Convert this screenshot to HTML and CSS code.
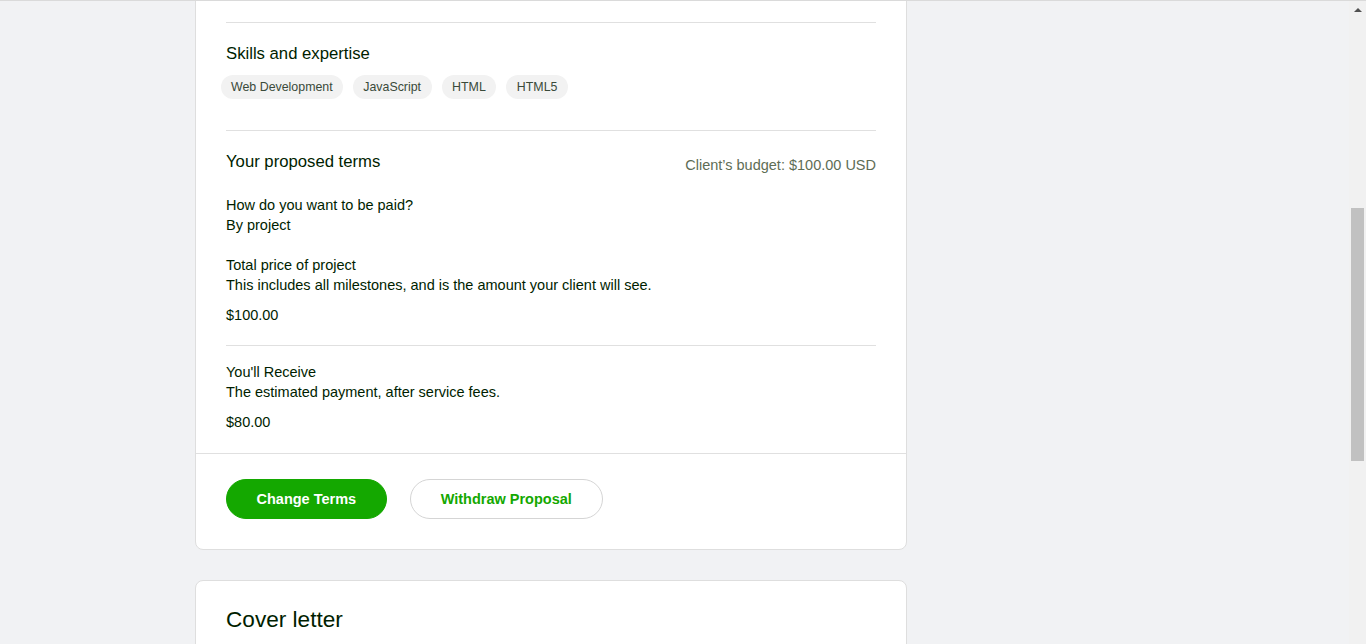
FILE: index.html
```html
<!DOCTYPE html>
<html lang="en">
<head>
<meta charset="utf-8">
<title>Proposal</title>
<link rel="stylesheet" href="styles.css">
</head>
<body>
<div class="page">
  <main class="column">
    <section class="card">
      <div class="section section-top"></div>

      <div class="section skills">
        <h3 class="section-title">Skills and expertise</h3>
        <ul class="chips">
          <li class="chip">Web Development</li>
          <li class="chip">JavaScript</li>
          <li class="chip">HTML</li>
          <li class="chip">HTML5</li>
        </ul>
      </div>

      <div class="section terms">
        <div class="terms-head">
          <h3 class="section-title">Your proposed terms</h3>
          <span class="budget">Client’s budget: $100.00 USD</span>
        </div>
        <div class="field">
          <div class="label">How do you want to be paid?</div>
          <div class="text">By project</div>
        </div>
        <div class="field">
          <div class="label">Total price of project</div>
          <div class="text">This includes all milestones, and is the amount your client will see.</div>
          <div class="amount">$100.00</div>
        </div>
      </div>

      <div class="section receive">
        <div class="field first">
          <div class="label">You'll Receive</div>
          <div class="text">The estimated payment, after service fees.</div>
          <div class="amount">$80.00</div>
        </div>
      </div>

      <div class="card-footer">
        <button class="btn btn-primary" type="button">Change Terms</button>
        <button class="btn btn-secondary" type="button">Withdraw Proposal</button>
      </div>
    </section>

    <section class="card cover">
      <h2 class="cover-title">Cover letter</h2>
    </section>
  </main>
</div>

<div class="scrollbar" aria-hidden="true">
  <div class="scroll-arrow"></div>
  <div class="scroll-thumb"></div>
</div>
</body>
</html>
```

FILE: styles.css
```css
html, body {
  margin: 0;
  padding: 0;
  height: 100%;
  overflow: hidden;
}

body {
  background: #f1f2f4;
  border-top: 1px solid #dadada;
  box-sizing: border-box;
  font-family: "Liberation Sans", Arial, sans-serif;
  color: #001e00;
  font-size: 14.5px;
  line-height: 20px;
}

.page {
  padding-left: 195px;
}

.column {
  width: 712px;
  display: flex;
  flex-direction: column;
  gap: 30px;
  margin-top: -12px;
}

.card {
  background: #fff;
  border: 1px solid #dedede;
  border-radius: 8px;
  box-sizing: border-box;
}

.section {
  margin: 0 30px;
  border-bottom: 1px solid #e0e0e0;
}

.section-top {
  height: 32px;
}

.section-title {
  margin: 0;
  font-size: 16.7px;
  font-weight: 500;
  line-height: 24px;
}

.skills {
  padding: 19px 0 31px;
}

.chips {
  list-style: none;
  margin: 9px 0 0 -5px;
  padding: 0;
  display: flex;
  gap: 10px;
}

.chip {
  height: 24px;
  line-height: 24px;
  padding: 0 10.5px;
  border-radius: 12px;
  background: #f2f2f2;
  font-size: 12.4px;
  color: #3a4a3a;
}

.chip:first-child {
  padding: 0 10px;
}

.terms {
  padding: 19px 0 20px;
}

.terms-head {
  display: flex;
  justify-content: space-between;
  align-items: flex-start;
}

.budget {
  color: #5e6d55;
  margin-top: 5px;
}

.field {
  margin-top: 20px;
}

.field.first {
  margin-top: 0;
}

.amount {
  margin-top: 10px;
}

.receive {
  padding: 16px 0 21px;
  border-bottom: none;
}

.card-footer {
  border-top: 1px solid #e0e0e0;
  padding: 25px 30px 30px;
  display: flex;
  gap: 23px;
}

.btn {
  height: 40px;
  padding: 0 30px;
  border-radius: 20px;
  font-family: inherit;
  font-size: 14.5px;
  font-weight: 700;
  cursor: pointer;
}

.btn-primary {
  background: #14a800;
  border: 1px solid #14a800;
  color: #fff;
  padding: 0 29.5px;
}

.btn-secondary {
  background: #fff;
  border: 1px solid #d5d5d5;
  color: #14a800;
}

.cover {
  padding: 24px 30px 40px;
}

.cover-title {
  margin: 0;
  font-size: 22.6px;
  font-weight: 400;
  line-height: 30px;
}

.scrollbar {
  position: fixed;
  top: 1px;
  right: 0;
  width: 17px;
  bottom: 0;
  background: #f1f1f1;
}

.scroll-arrow {
  width: 0;
  height: 0;
  margin: 7px auto 0;
  border-left: 4px solid transparent;
  border-right: 4px solid transparent;
  border-bottom: 4px solid #505050;
}

.scroll-thumb {
  position: absolute;
  top: 207px;
  left: 2px;
  width: 13px;
  height: 253px;
  background: #c1c1c1;
}
```
